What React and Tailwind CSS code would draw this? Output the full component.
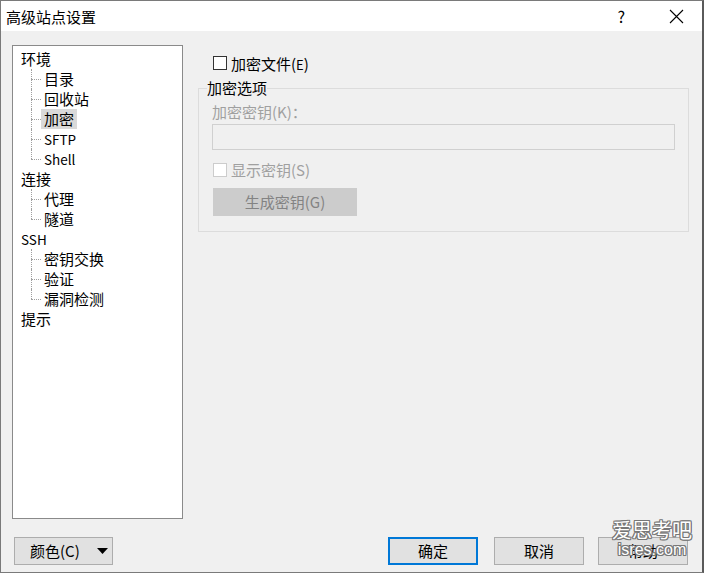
import React from 'react'

const font = { fontFamily: "'Noto Sans CJK SC', 'Noto Sans', sans-serif" }

const tree = [
  { label: '环境', children: ['目录', '回收站', '加密', 'SFTP', 'Shell'] },
  { label: '连接', children: ['代理', '隧道'] },
  { label: 'SSH', children: ['密钥交换', '验证', '漏洞检测'] },
  { label: '提示', children: [] },
]

const latin = (s) => /^[A-Za-z]+$/.test(s)

const TreeChild = ({ label, last, selected }) => (
  <div className="flex h-[20px] items-stretch pl-[10px]">
    <div className="relative w-[10px]">
      <span
        className={`absolute left-0 top-0 border-l border-dotted border-[#a0a0a0] ${last ? 'h-[10px]' : 'h-full'}`}
      />
      <span className="absolute left-0 top-[10px] w-[10px] border-t border-dotted border-[#a0a0a0]" />
    </div>
    <div
      className={`px-[3px] leading-[20px] ${selected ? 'bg-[#d9d9d9]' : ''} ${latin(label) ? 'text-[13.5px]' : ''}`}
    >
      {label}
    </div>
  </div>
)

const Checkbox = ({ disabled }) => (
  <span
    className={`inline-block h-[14px] w-[14px] border bg-white ${disabled ? 'border-[#cccccc]' : 'border-[#333333]'}`}
  />
)

const Button = ({ children, primary, className = '' }) => (
  <button
    className={`flex h-[28px] w-[90px] items-center justify-center bg-[#e1e1e1] text-[15px] text-black ${
      primary ? 'border-2 border-[#0078d7]' : 'border border-[#adadad]'
    } ${className}`}
  >
    {children}
  </button>
)

export default function App() {
  return (
    <div className="h-[575px] w-[706px] bg-white text-[15px] text-black" style={font}>
      <div className="flex h-[573px] w-[704px] flex-col border border-[#7a7a7a] border-r-2 border-r-[#5a5a5a]">
        {/* Title bar */}
        <div className="flex h-[30px] shrink-0 items-center bg-white pl-[5px]">
          <span className="text-[15px] leading-none">高级站点设置</span>
          <span className="ml-auto mr-[44px] text-[16px] leading-none">?</span>
          <svg width="15" height="15" viewBox="0 0 15 15" className="mr-[18px]">
            <path d="M1 1 L14 14 M14 1 L1 14" stroke="#000" strokeWidth="1.1" />
          </svg>
        </div>

        {/* Body */}
        <div className="flex flex-1 flex-col bg-[#f0f0f0] pl-[11px] pt-[14px]">
          <div className="flex">
            {/* Tree */}
            <div className="h-[474px] w-[171px] border border-[#8a8a8a] bg-white pl-[8px] pt-[3px]">
              {tree.map((g) => (
                <div key={g.label}>
                  <div className={`h-[20px] leading-[20px] ${latin(g.label) ? 'text-[13.5px]' : ''}`}>{g.label}</div>
                  {g.children.map((c, i) => (
                    <TreeChild
                      key={c}
                      label={c}
                      last={i === g.children.length - 1}
                      selected={c === '加密'}
                    />
                  ))}
                </div>
              ))}
            </div>

            {/* Right panel */}
            <div className="ml-[15px] w-[491px]">
              <div className="mt-[10px] flex h-[16px] items-center pl-[15px]">
                <Checkbox />
                <span className="ml-[4px] leading-none">
                  加密文件(<span className="text-[13px]">E</span>)
                </span>
              </div>

              <fieldset className="mt-[8px] h-[153px] border border-[#dcdcdc] px-0">
                <legend className="ml-[8px] px-0 leading-[18px]">加密选项</legend>
                <div className="pl-[13px] pr-[12px]">
                  <div className="mt-[6px] leading-[18px] text-[#a0a0a0]">加密密钥(K)：</div>
                  <div className="mt-[3px] h-[26px] w-[463px] border border-[#d0d0d0] bg-[#f0f0f0]" />
                  <div className="mt-[12px] flex h-[15px] items-center pl-[1px]">
                    <Checkbox disabled />
                    <span className="ml-[4px] leading-none text-[#a0a0a0]">显示密钥(S)</span>
                  </div>
                  <div className="ml-[1px] mt-[11px] flex h-[28px] w-[144px] items-center justify-center bg-[#cccccc] text-[#838383]">
                    生成密钥(G)
                  </div>
                </div>
              </fieldset>
            </div>
          </div>

          {/* Bottom buttons */}
          <div className="relative mt-[18px] flex items-center">
            <button className="ml-[2px] flex h-[28px] w-[99px] items-center border border-[#adadad] bg-[#e1e1e1] pl-[15px] text-[15px]">
              <span>颜色(C)</span>
              <svg width="11" height="6" viewBox="0 0 11 6" className="ml-auto mr-[4px]">
                <path d="M0 0 L11 0 L5.5 6 Z" fill="#000" />
              </svg>
            </button>
            <Button primary className="ml-[275px]">确定</Button>
            <Button className="ml-[16px]">取消</Button>
            <Button className="ml-[14px]">帮助</Button>

            {/* watermark */}
            <div
              className="pointer-events-none absolute right-[10px] top-[-18px] flex flex-col items-center text-white"
              style={{
                textShadow:
                  '1px 0 #777, -1px 0 #777, 0 1px #777, 0 -1px #777, 1px 1px #777, -1px -1px #777, 1px -1px #777, -1px 1px #777',
              }}
            >
              <span className="text-[20px] leading-[22px]">爱思考吧</span>
              <span className="text-[16px] leading-[18px]" style={{ fontFamily: "'Liberation Sans Narrow', 'Liberation Sans', sans-serif" }}>
                isres.com
              </span>
            </div>
          </div>
        </div>
      </div>
    </div>
  )
}
